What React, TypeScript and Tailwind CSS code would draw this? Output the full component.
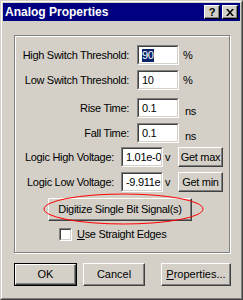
import React from "react";

const font = { fontFamily: '"Liberation Sans", Arial, sans-serif' };

function Sunken({ children, w, selected }: { children?: React.ReactNode; w: string; selected?: boolean }) {
  return (
    <div className={`${w} h-[20px] border border-t-[#808080] border-l-[#808080] border-b-white border-r-white`}>
      <div className="h-full w-full border border-t-[#404040] border-l-[#404040] border-b-[#d4d0c8] border-r-[#d4d0c8] bg-white flex items-center pl-[3px] overflow-hidden whitespace-nowrap text-[11px] text-black">
        {selected ? <span className="bg-[#0a246a] text-white leading-[13px]">{children}</span> : children}
      </div>
    </div>
  );
}

function Btn({ children, className = "", def }: { children: React.ReactNode; className?: string; def?: boolean }) {
  const inner = (
    <div className="h-full w-full flex items-center justify-center border border-t-white border-l-white border-b-[#404040] border-r-[#404040] shadow-[inset_-1px_-1px_0_#808080] text-[11px] text-black whitespace-nowrap">
      {children}
    </div>
  );
  if (def) return <div className={`border border-black ${className}`}>{inner}</div>;
  return <div className={className}>{inner}</div>;
}

export default function App() {
  return (
    <div style={font} className="w-[243px] h-[300px] bg-[#d4d0c8] border border-t-[#d4d0c8] border-l-[#d4d0c8] border-b-[#404040] border-r-[#404040]">
      <div className="h-full w-full border border-t-white border-l-white border-b-[#808080] border-r-[#808080] p-[1px]">
        {/* title bar */}
        <div className="h-[18px] bg-[#000080] flex items-start">
          <div className="pl-[2px] text-white font-bold text-[12px] leading-[18px] flex-1">Analog Properties</div>
          <div className="mt-[2px] w-[16px] h-[14px] border border-t-white border-l-white border-b-black border-r-black shadow-[inset_-1px_-1px_0_#808080] bg-[#d4d0c8] flex items-center justify-center text-[11px] font-bold leading-none text-black">?</div>
          <div className="mt-[2px] ml-[2px] mr-[2px] w-[16px] h-[14px] border border-t-white border-l-white border-b-black border-r-black shadow-[inset_-1px_-1px_0_#808080] bg-[#d4d0c8] flex items-center justify-center">
            <svg width="8" height="7" viewBox="0 0 8 7">
              <path d="M0 0h2l2 2.5L6 0h2L5 3.5 8 7H6L4 4.5 2 7H0l3-3.5z" fill="black" />
            </svg>
          </div>
        </div>

        {/* group box */}
        <div className="relative ml-[11px] mt-[14px] w-[216px] h-[218px] border border-[#808080] shadow-[inset_1px_1px_0_#fff,1px_1px_0_#fff] text-[11px] tracking-[-0.3px] text-black">
          <div className="flex items-center mt-[9px] h-[20px]">
            <div className="w-[114px] text-right whitespace-nowrap">High Switch Threshold:</div>
            <div className="ml-[8px]"><Sunken w="w-[42px]" selected>90</Sunken></div>
            <div className="ml-[4px]">%</div>
          </div>
          <div className="flex items-center mt-[5px] h-[20px]">
            <div className="w-[114px] text-right whitespace-nowrap">Low Switch Threshold:</div>
            <div className="ml-[8px]"><Sunken w="w-[42px]">10</Sunken></div>
            <div className="ml-[4px]">%</div>
          </div>
          <div className="flex items-center mt-[8px] h-[20px]">
            <div className="w-[114px] text-right whitespace-nowrap">Rise Time:</div>
            <div className="ml-[8px]"><Sunken w="w-[42px]">0.1</Sunken></div>
            <div className="ml-[6px] pt-[6px]">ns</div>
          </div>
          <div className="flex items-center mt-[5px] h-[20px]">
            <div className="w-[114px] text-right whitespace-nowrap">Fall Time:</div>
            <div className="ml-[8px]"><Sunken w="w-[42px]">0.1</Sunken></div>
            <div className="ml-[6px] pt-[6px]">ns</div>
          </div>
          <div className="flex items-center mt-[4px] h-[20px]">
            <div className="w-[99px] text-right whitespace-nowrap">Logic High Voltage:</div>
            <div className="ml-[7px]"><Sunken w="w-[42px]">1.01e-009</Sunken></div>
            <div className="w-[15px] pl-[2px]">v</div>
            <Btn className="w-[45px] h-[20px]">Get max</Btn>
          </div>
          <div className="flex items-center mt-[5px] h-[20px]">
            <div className="w-[99px] text-right whitespace-nowrap">Logic Low Voltage:</div>
            <div className="ml-[7px]"><Sunken w="w-[42px]">-9.911e-001</Sunken></div>
            <div className="w-[15px] pl-[2px]">v</div>
            <Btn className="w-[45px] h-[20px]">Get min</Btn>
          </div>
          <div className="mt-[6px] ml-[33px]">
            <Btn className="w-[144px] h-[23px]">Digitize Single Bit Signal(s)</Btn>
          </div>
          <div className="mt-[7px] ml-[44px] flex items-center">
            <div className="w-[13px] h-[13px] border border-t-[#808080] border-l-[#808080] border-b-white border-r-white">
              <div className="w-full h-full border border-t-[#404040] border-l-[#404040] border-b-[#d4d0c8] border-r-[#d4d0c8] bg-white" />
            </div>
            <div className="ml-[5px] leading-[13px]"><span className="underline">U</span>se Straight Edges</div>
          </div>

          <svg className="absolute left-[28px] top-[157px]" width="161" height="32" viewBox="0 0 161 32">
            <ellipse cx="80.5" cy="16" rx="79.5" ry="15" fill="none" stroke="#ff0000" strokeWidth="1" />
          </svg>
        </div>

        {/* bottom buttons */}
        <div className="flex mt-[10px] ml-[11px]">
          <Btn def className="w-[63px] h-[23px]">OK</Btn>
          <Btn className="ml-[6px] w-[62px] h-[23px]">Cancel</Btn>
          <Btn className="ml-[16px] w-[70px] h-[23px]"><span><span className="underline">P</span>roperties...</span></Btn>
        </div>
      </div>
    </div>
  );
}
